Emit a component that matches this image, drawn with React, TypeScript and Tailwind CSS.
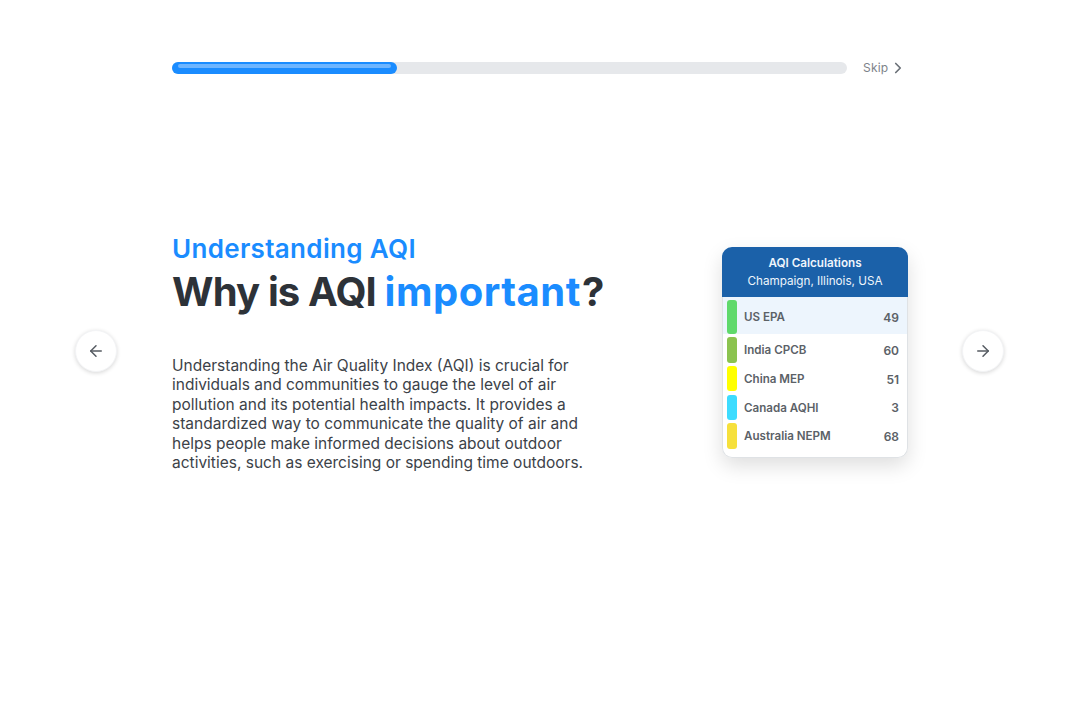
import React from 'react';
import { ArrowLeft, ArrowRight, ChevronRight } from 'lucide-react';

const rows = [
  { name: 'US EPA', value: 49, color: 'bg-[#5fd96b]', active: true },
  { name: 'India CPCB', value: 60, color: 'bg-[#8bc34f]' },
  { name: 'China MEP', value: 51, color: 'bg-[#ffff00]' },
  { name: 'Canada AQHI', value: 3, color: 'bg-[#3ddcff]' },
  { name: 'Australia NEPM', value: 68, color: 'bg-[#f6e03c]' },
];

const NavButton: React.FC<{ children: React.ReactNode }> = ({ children }) => (
  <button className="flex h-[42px] w-[42px] shrink-0 items-center justify-center rounded-full border border-gray-100 bg-white text-[#555b62] shadow-[0_1px_4px_rgba(0,0,0,0.16)]">
    {children}
  </button>
);

const App: React.FC = () => {
  return (
    <div className="flex h-[702px] w-full flex-col overflow-hidden bg-white font-['Inter',sans-serif]">
      {/* Progress */}
      <div className="ml-[172px] mt-[59px] flex items-center">
        <div className="h-3 w-[675px] shrink-0 rounded-full bg-[#e6e8eb]">
          <div className="h-3 w-[225px] rounded-full bg-[#1a8cff] px-[6px] pt-[2px]">
            <div className="h-[4px] rounded-full bg-[#6db5ff]" />
          </div>
        </div>
        <span className="ml-4 w-6 text-[12px] leading-3 tracking-[0.2px] text-[#7d8389]">Skip</span>
        <ChevronRight className="ml-[2px] h-[18px] w-[18px] text-[#6b7178]" strokeWidth={2.25} />
      </div>

      {/* Slide */}
      <div className="mt-[155px] flex items-center pl-[75px]">
        <NavButton>
          <ArrowLeft className="h-[18px] w-[18px]" strokeWidth={2} />
        </NavButton>

        <div className="ml-[55px] mr-[54px] flex w-[736px] items-start justify-between">
          <div className="h-[238px] w-[440px] pt-[1px]">
            <p className="whitespace-nowrap text-[26px] font-semibold leading-[32px] tracking-[0.33px] text-[#1a8cff]">Understanding AQI</p>
            <h1 className="mt-[2px] whitespace-nowrap text-[40px] font-bold leading-[50px] text-[#2d3238]">
              <span className="tracking-[-0.85px]">Why is AQI </span>
              <span className="tracking-[0.5px] text-[#1a8cff]">important</span>
              <span className="ml-[1px]">?</span>
            </h1>
            <p className="mt-[39px] text-[15.5px] leading-[19.4px] text-[#3c4248]">
              Understanding the Air Quality Index (AQI) is crucial for individuals and communities to gauge the level of air pollution and its potential health impacts. It provides a standardized way to communicate the quality of air and helps people make informed decisions about outdoor activities, such as exercising or spending time outdoors.
            </p>
          </div>

          <div className="mt-[15px] h-[211px] w-[186px] rounded-[10px] bg-white shadow-[0_8px_20px_rgba(0,0,0,0.13)]">
            <div className="flex h-[50px] flex-col items-center justify-center rounded-t-[10px] bg-[#1b61a9] text-[11.7px] leading-[18px] text-[#eef5fc]">
              <span className="font-semibold">AQI Calculations</span>
              <span>Champaign, Illinois, USA</span>
            </div>
            <div className="h-[161px] rounded-b-[10px] border-x border-b border-[#dfe2e5]">
              {rows.map((row) => (
                <div
                  key={row.name}
                  className={`flex items-center pl-[4px] pr-[8px] text-[11.6px] font-semibold text-[#5b6167] ${row.active ? 'h-[37px] bg-[#edf5fd] pt-[3px]' : 'mt-[3.2px] h-[25.5px]'}`}
                >
                  <span className={`w-[10px] rounded-[3px] ${row.color} ${row.active ? 'h-[34px]' : 'h-[25.5px]'}`} />
                  <span className="ml-[7px] flex-1 translate-y-[0.5px] whitespace-nowrap">{row.name}</span>
                  <span className="translate-y-[0.5px] text-[12px]">{row.value}</span>
                </div>
              ))}
            </div>
          </div>
        </div>

        <NavButton>
          <ArrowRight className="h-[18px] w-[18px]" strokeWidth={2} />
        </NavButton>
      </div>
    </div>
  );
};

export default App;
